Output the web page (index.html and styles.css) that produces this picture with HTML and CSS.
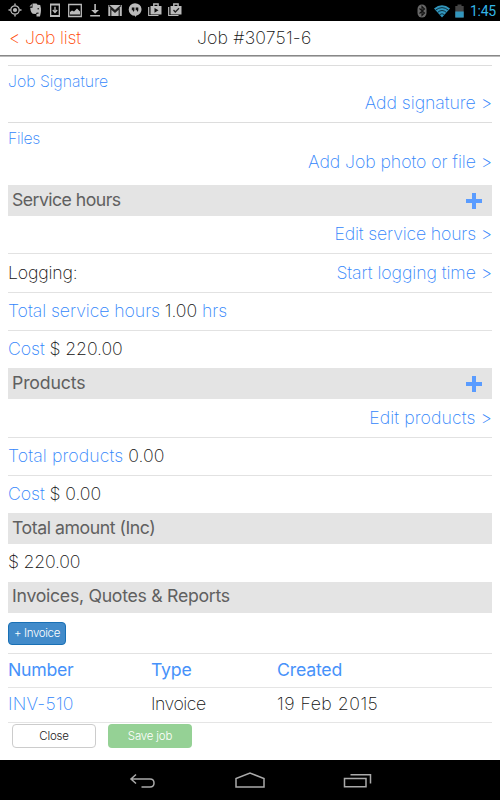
FILE: index.html
```html
<!DOCTYPE html>
<html lang="en">
<head>
<meta charset="utf-8">
<title>Job #30751-6</title>
<link rel="stylesheet" href="styles.css">
</head>
<body>
<div class="status">
  <div class="notifications">
    <svg viewBox="0 0 20 20"><circle cx="10" cy="10" r="4.2" fill="none" stroke="#bbb" stroke-width="1.3"/><circle cx="10" cy="10" r="2.1" fill="#bbb"/><path d="M10 3.5v2M10 14.5v2M3.5 10h2M14.500 10h2" stroke="#bbb" stroke-width="1.4"/></svg>
    <svg viewBox="0 0 20 20"><path d="M7.500 3.500h4l1 1.200 2.700.4.700 3c.3 3-.2 6-1 8.300h-3.400v-2.600h2v-1.300l-2 .2-.8 1.300-3-.2c-2-1.300-2.300-4-2.500-6h2.300z" fill="#bbb"/><path d="M4.500 6.500l2.300-2.400v2.400z" fill="#bbb"/><path d="M12.500 8.800h1.500" stroke="#000"/></svg>
    <svg viewBox="0 0 20 20"><path fill="#bbb" fill-rule="evenodd" d="M5 3.500h10v13.500H5zM6.300 5.500v9.500h7.400V5.500z"/><path d="M10 6.700v5M7.800 10l2.200 2.600 2.200-2.600" fill="none" stroke="#bbb" stroke-width="1.300"/></svg>
    <svg viewBox="0 0 20 20"><path d="M3.700 4.500h12.600v12H3.700z" fill="none" stroke="#bbb" stroke-width="1.300"/><path d="M5 14.500V12l2-1.500 2 1 3-3 3 3v3z" fill="#bbb"/></svg>
    <svg viewBox="0 0 20 20"><path d="M9.300 4h1.600v6H14l-3.900 3.800L6.200 10h3.100zM5.200 15h9.800v1.500H5.200z" fill="#bbb"/></svg>
    <svg viewBox="0 0 20 20"><path d="M3.300 5h13.500v11H3.300z" fill="#bbb"/><path d="M5.800 16V8.500l4.200 3.700 4.200-3.700V16M4 5.500l6 5.200 6-5.200" fill="none" stroke="#222" stroke-width="1.200"/></svg>
    <svg viewBox="0 0 20 20"><path d="M10 3.200a6.500 6.300 0 0 1 1.200 12.500L10 17.300v-1.500A6.300 6.300 0 0 1 10 3.200z" fill="#bbb"/><path d="M6.800 7.500h2.600v3L8 12v-1.700H6.800zM10.700 7.500h2.600v3L12 12v-1.700h-1.300z" fill="#111"/></svg>
    <svg viewBox="0 0 20 20"><path d="M3.700 7v8.500h9.800" fill="none" stroke="#bbb" stroke-width="1.200"/><path d="M5.500 6h11v8.500h-11z" fill="#bbb"/><path d="M8.800 6V4h4.300v2" fill="none" stroke="#bbb" stroke-width="1.400"/><path d="M9.500 8l4 2.300-4 2.400z" fill="#111"/></svg>
    <svg viewBox="0 0 20 20"><path d="M3.700 7v8.500h9.800" fill="none" stroke="#bbb" stroke-width="1.200"/><path d="M5.500 6h11v8.500h-11z" fill="#bbb"/><path d="M8.800 6V4h4.300v2" fill="none" stroke="#bbb" stroke-width="1.400"/><path d="M8.500 10l1.800 2L14 8.200" fill="none" stroke="#222" stroke-width="1.300"/></svg>
  </div>
  <div class="system">
    <svg viewBox="0 0 10 14" width="10" height="14"><rect x=".5" y=".5" width="9" height="13" rx="4.500" fill="#666"/><path d="M2.500 4.500l5 4.500L5 11.500v-9L7.500 5l-5 4.500" fill="none" stroke="#111" stroke-width="1.100"/></svg>
    <svg viewBox="0 0 18 14" width="18" height="14"><path d="M1 4.500Q9-2 17 4.500L9 13.500z" fill="#3296bd"/><path d="M2.500 6.200Q9 1 15.500 6.200M4.500 8.500Q9 4.500 13.500 8.500M6.500 10.700q2.500-2 5 0" fill="none" stroke="#062530" stroke-width=".9"/></svg>
    <svg viewBox="0 0 9 14" width="9" height="14"><path d="M.3 2H2.500V.5h4V2h2.200v11.500H.3z" fill="#444"/><path d="M.3 7.500h8.400v6H.3z" fill="#3296bd"/></svg>
    <span class="clock">1:45</span>
  </div>
</div>
<header class="topbar"><a class="back">&lt; Job list</a><h1>Job #30751-6</h1></header>
<main>
  <section class="block signature"><span class="caption">Job Signature</span><a class="action add-signature">Add signature &gt;</a></section>
  <section class="block files"><span class="caption cap-files">Files</span><a class="action add-file">Add Job photo or file &gt;</a></section>
  <h2><span class="t-service">Service hours</span><i class="plus"></i></h2>
  <div class="row end first"><a class="w-edit-hours">Edit service hours &gt;</a></div>
  <div class="row"><span class="w-logging">Logging:</span><a class="w-start">Start logging time &gt;</a></div>
  <div class="row"><span class="w-total-hours"><b>Total service hours</b> 1.00 <b>hrs</b></span></div>
  <div class="row last"><span class="w-cost"><b>Cost</b> $ 220.00</span></div>
  <h2><span class="t-products">Products</span><i class="plus"></i></h2>
  <div class="row end"><a class="w-edit-products">Edit products &gt;</a></div>
  <div class="row"><span class="w-total-products"><b>Total products</b> 0.00</span></div>
  <div class="row last"><span class="w-cost"><b>Cost</b> $ 0.00</span></div>
  <h2><span class="t-total">Total amount (Inc)</span></h2>
  <div class="row amount"><span class="w-amount">$ 220.00</span></div>
  <h2><span class="t-invoices">Invoices, Quotes &amp; Reports</span></h2>
  <button class="invoice">+ Invoice</button>
  <div class="table">
    <div class="tr head"><span class="c-number">Number</span><span class="c-type">Type</span><span class="c-created">Created</span></div>
    <div class="tr"><span class="c-inv"><b>INV-510</b></span><span class="c-invoice">Invoice</span><span class="c-date">19 Feb 2015</span></div>
  </div>
  <footer><button class="close">Close</button><button class="save">Save job</button></footer>
</main>
<nav>
  <svg viewBox="0 0 30 20" width="30" height="20"><path d="M9 4.500L4 9l5 4.500M4 9h19q4 0 4 4t-4 4h-8.500" fill="none" stroke="#aaa" stroke-width="1.500"/></svg>
  <svg viewBox="0 0 32 20" width="32" height="20"><path d="M2 17V8.500L16 3l14 5.500V17z" fill="none" stroke="#aaa" stroke-width="1.500"/></svg>
  <svg viewBox="0 0 30 20" width="30" height="20"><path d="M1.500 8.500h21.500v8.300H1.500zM7.500 4.800h20v8.700" fill="none" stroke="#aaa" stroke-width="1.500"/></svg>
</nav>
</body>
</html>
```
FILE: styles.css
```css
* { box-sizing: border-box; }
body { margin: 0; width: 500px; height: 800px; overflow: hidden; display: flex; flex-direction: column; background: #fff; color: #111; font: 250 17.700px/24px Inter, "Liberation Sans", sans-serif; }
svg { display: block; flex: none; }
.status { height: 21px; background: #000; display: flex; justify-content: space-between; flex: none; }
.notifications { display: flex; padding-left: 5px; }
.notifications svg { width: 20px; height: 20px; }
.system { display: flex; align-items: center; padding-right: 4px; }
.system svg + svg { margin-left: 6px; }
.system svg:nth-of-type(3) { margin-left: 4px; }
.clock { width: 26px; margin-left: 6px; color: #33b5e5; font: 400 14px/20px Roboto, sans-serif; letter-spacing: -.3px; white-space: nowrap; }
.topbar { height: 36px; flex: none; border-bottom: 1px solid #bbb; box-shadow: inset 0 -1px #888; display: grid; grid-template-columns: 188px 1fr; padding: 5px 9px 0; white-space: nowrap; }
h1 { margin: 0; font: inherit; letter-spacing: .15px; }
.back { color: #ff4a08; letter-spacing: -.2px; }
main { flex: 1; padding: 8px 8px 0; display: flex; flex-direction: column; white-space: nowrap; min-height: 0; }
a, b { color: #3386fb; font-weight: 250; }
.block { display: flex; flex-direction: column; flex: none; border-top: 1px solid #ddd; }
.signature { height: 57px; padding-top: 5px; }
.files { height: 63px; padding-top: 5px; }
.caption { color: #3386fb; font-size: 15.800px; line-height: 22px; }
.cap-files { letter-spacing: -.3px; }
.action { align-self: flex-end; margin-top: -2px; }
.files .action { margin-top: 0; }
.add-signature { letter-spacing: -.05px; }
.add-file { letter-spacing: -.08px; }
h2 { margin: 0; height: 31px; flex: none; background: #e4e4e4; color: #606060; font: 370 17.700px/28px Inter, sans-serif; padding: 0 10px 2px 4px; display: flex; justify-content: space-between; align-items: center; }
.plus { width: 16px; height: 16px; margin-top: 3px; background: linear-gradient(#5a9cff, #5a9cff) 50% 50% / 16px 4px no-repeat, linear-gradient(#5a9cff, #5a9cff) 50% 50% / 4px 16px no-repeat; }
.t-service { letter-spacing: -.55px; }
.t-products { letter-spacing: -.15px; }
.t-total { letter-spacing: -.45px; }
.t-invoices { letter-spacing: -.28px; }
.row { height: 38.400px; flex: none; display: flex; justify-content: space-between; align-items: center; border-bottom: 1px solid #e2e2e2; padding-bottom: 1px; }
.end { justify-content: flex-end; }
.last, .amount { border: 0; height: 37.200px; }
.w-edit-hours { letter-spacing: -.18px; }
.w-logging { letter-spacing: -.2px; }
.w-start { letter-spacing: -.08px; }
.w-total-hours, .w-cost { letter-spacing: -.08px; }
.w-edit-products, .w-total-products { letter-spacing: .08px; }
.w-amount { letter-spacing: -.2px; }
button { padding: 0; font: 300 11.500px/20px Inter, sans-serif; border-radius: 4px; flex: none; letter-spacing: -.2px; }
.invoice { width: 58px; height: 23px; margin-top: 9px; background: #428bca; color: #fff; border: 1px solid #1970b5; letter-spacing: -.35px; }
.table { margin-top: 8px; flex: none; border-top: 1px solid #e2e2e2; }
.tr { display: grid; grid-template-columns: 143px 126px 1fr; height: 34.500px; border-bottom: 1px solid #e5e5e5; line-height: 31px; }
.head { color: #4792fa; font-weight: 370; }
.c-number { letter-spacing: -.3px; }
.c-type, .c-created { letter-spacing: -.2px; }
.c-inv { letter-spacing: .2px; }
.c-invoice { letter-spacing: -.5px; }
.c-date { letter-spacing: .5px; }
footer { display: flex; gap: 12px; padding: 1.400px 4px; }
footer button { width: 84px; height: 24px; }
.close { background: #fff; color: #222; border: 1px solid #ccc; }
.save { background: #95d195; color: #fff; border: 0; }
nav { height: 40px; flex: none; background: #000; display: flex; align-items: center; justify-content: center; gap: 77px; }
```
